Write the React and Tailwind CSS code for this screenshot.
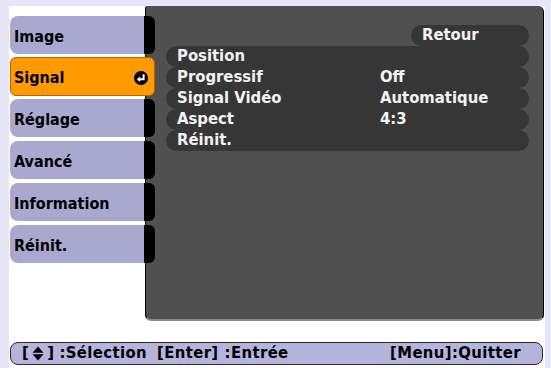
import React from "react";

const tabs = ["Image", "Signal", "Réglage", "Avancé", "Information", "Réinit."];

const rows = [
  { label: "Position", value: "" },
  { label: "Progressif", value: "Off" },
  { label: "Signal Vidéo", value: "Automatique" },
  { label: "Aspect", value: "4:3" },
  { label: "Réinit.", value: "" },
];

function EnterIcon() {
  return (
    <svg width="14" height="14" viewBox="0 0 14 14">
      <circle cx="7" cy="7" r="7" fill="#000" />
      <path d="M9.6 3.2 V8.2 H5.6" stroke="#fff" strokeWidth="2" fill="none" />
      <polygon points="2.8,8.2 6.2,5.4 6.2,11" fill="#fff" />
    </svg>
  );
}

function UpDownIcon() {
  return (
    <svg width="12" height="15" viewBox="0 0 12 15" className="mx-[3px]">
      <polygon points="6,0.5 11.5,6.8 0.5,6.8" fill="#000" />
      <polygon points="0.5,8.2 11.5,8.2 6,14.5" fill="#000" />
    </svg>
  );
}

export default function App() {
  return (
    <div className="w-[551px] h-[368px] overflow-hidden bg-[#e6e6f7] pl-[9px] pr-[6px] pt-[6px] font-['DejaVu_Sans_Condensed','DejaVu_Sans',sans-serif] font-bold">
      <div className="bg-white h-full flex flex-col">
        <div className="flex h-[315px]">
          {/* Tabs */}
          <div className="relative z-10 w-[146px] mr-[-10px] pl-[1px] pt-[10px] flex flex-col gap-[4px]">
            {tabs.map((t) =>
              t === "Signal" ? (
                <div
                  key={t}
                  className="h-[39px] -my-[1px] flex items-center justify-between bg-[#ff9a00] border-[1.5px] border-[#b86200] rounded-[6px] pl-[3px] pr-[6px] pt-[2px] text-[16px] text-black"
                >
                  <span>{t}</span>
                  <EnterIcon />
                </div>
              ) : (
                <div key={t} className="h-[38px] flex">
                  <div className="flex-1 flex items-center bg-[#a9a9cf] rounded-l-[8px] pl-[4px] pt-[3px] text-[16px] text-black">
                    {t}
                  </div>
                  <div className="w-[11px] bg-black rounded-r-[6px]" />
                </div>
              )
            )}
          </div>

          {/* Panel */}
          <div className="flex-1 mr-[1px] bg-[#505050] border-l border-r border-black border-b-2 border-b-[#8c8c8c] rounded-tr-[6px] rounded-tl-[3px] rounded-b-[6px] pt-[19px] pl-[20px] pr-[14px] text-[16.5px] text-[#f2f2f2]">
            <div className="flex justify-end">
              <div className="w-[118px] h-[21px] flex items-center bg-[#363636] rounded-full pl-[11px] leading-none">
                Retour
              </div>
            </div>
            {rows.map((r) => (
              <div
                key={r.label}
                className="h-[21px] flex items-center bg-[#363636] rounded-full pl-[11px] leading-none"
              >
                <span className="w-[203px]">{r.label}</span>
                <span>{r.value}</span>
              </div>
            ))}
          </div>
        </div>

        {/* Bottom bar */}
        <div className="mt-[21px] ml-[1px] mr-[2px] h-[23px] flex items-center bg-[#b4b4dc] border-[1.5px] border-[#2a2a2a] rounded-[8px] pl-[11px] pr-[21px] text-[16.5px] tracking-[0.4px] text-black leading-none">
          <span className="flex items-center">
            [<UpDownIcon />]<span className="ml-[5px]">:Sélection</span>
          </span>
          <span className="ml-[10px]">
            [Enter]<span className="ml-[6px]">:Entrée</span>
          </span>
          <span className="ml-auto">[Menu]:Quitter</span>
        </div>
      </div>
    </div>
  );
}
